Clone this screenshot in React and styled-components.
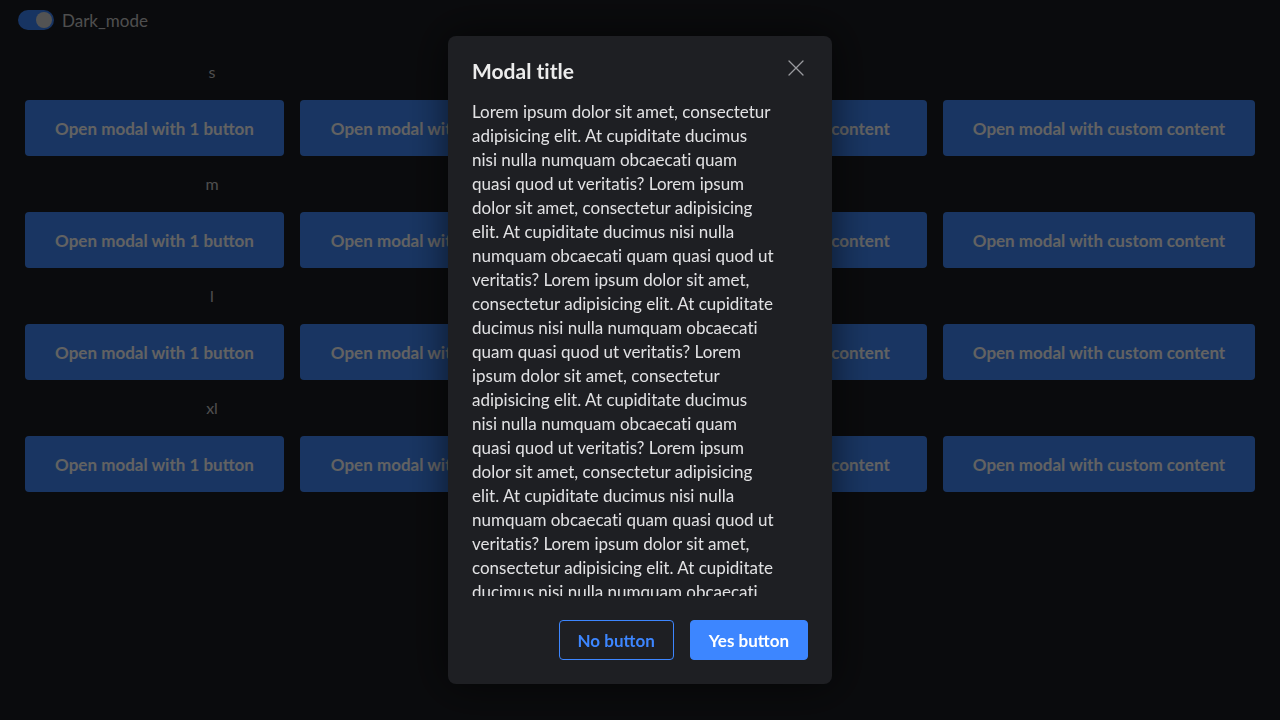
import React from 'react';
import styled, { createGlobalStyle } from 'styled-components';

const GlobalStyle = createGlobalStyle`
  html, body {
    margin: 0;
    padding: 0;
    background: #1a1c21;
    font-family: Lato, "Noto Sans", sans-serif;
    font-variant-ligatures: none;
  }
`;

const Page = styled.div`
  min-height: 720px;
  background: #1a1c21;
  color: #c8c8c8;
`;

const TopBar = styled.div`
  height: 40px;
  display: flex;
  align-items: center;
  gap: 8px;
  padding-left: 18px;
`;

const Switch = styled.span`
  position: relative;
  width: 36px;
  height: 20px;
  border-radius: 10px;
  background: #3b82f6;
  display: inline-block;

  &::after {
    content: '';
    position: absolute;
    top: 2px;
    right: 2px;
    width: 16px;
    height: 16px;
    border-radius: 50%;
    background: #d0d0d0;
  }
`;

const SwitchLabel = styled.span`
  font-size: 17px;
  color: #c4c4c4;
`;

const Sections = styled.div`
  padding: 20px 25px 0;
`;

const SizeLabel = styled.div`
  width: 374px;
  height: 24px;
  line-height: 24px;
  text-align: center;
  font-size: 16px;
  color: #c4c4c4;
  margin-bottom: 16px;
`;

const ButtonRow = styled.div`
  display: grid;
  grid-template-columns: 259px 268px 343px 312px;
  gap: 16px;
  margin-bottom: 16px;
`;

const OpenButton = styled.button`
  height: 56px;
  border: none;
  border-radius: 4px;
  background: #3f86f5;
  color: #f5f5f5;
  font-family: inherit;
  font-size: 17px;
  font-weight: 700;
  white-space: nowrap;
  overflow: hidden;
  padding: 0 16px;
`;

const Overlay = styled.div`
  position: fixed;
  inset: 0;
  background: rgba(0, 0, 0, 0.6);
  display: flex;
  align-items: center;
  justify-content: center;
`;

const Modal = styled.div`
  width: 384px;
  height: 648px;
  box-sizing: border-box;
  background: #1e1f23;
  border-radius: 8px;
  padding: 24px;
  display: flex;
  flex-direction: column;
  box-shadow: 0 0 40px rgba(0, 0, 0, 0.6);
`;

const Header = styled.div`
  display: flex;
  align-items: center;
  justify-content: space-between;
  height: 20px;
  margin-bottom: 20px;
`;

const Title = styled.h2`
  margin: 0;
  font-size: 21px;
  font-weight: 700;
  color: #ececec;
`;

const Close = styled.button`
  border: none;
  background: none;
  padding: 0;
  margin-right: 4px;
  margin-top: -4px;
  color: #9a9b9f;
  display: flex;
`;

const Body = styled.div`
  flex: 1;
  overflow: hidden;
  white-space: pre-line;
  font-size: 17px;
  line-height: 24px;
  color: #e2e2e4;
`;

const Footer = styled.div`
  display: flex;
  justify-content: flex-end;
  gap: 16px;
  margin-top: 24px;
`;

const FooterButton = styled.button`
  height: 40px;
  padding: 0 18px;
  border-radius: 4px;
  font-family: inherit;
  font-size: 17px;
  font-weight: 700;
  border: 1px solid #3d86ff;
  background: ${(p) => (p.$primary ? '#3d86ff' : 'transparent')};
  color: ${(p) => (p.$primary ? '#ffffff' : '#3d86ff')};
`;

const repeated = [
  'adipisicing elit. At cupiditate ducimus',
  'nisi nulla numquam obcaecati quam',
  'quasi quod ut veritatis? Lorem ipsum',
  'dolor sit amet, consectetur adipisicing',
  'elit. At cupiditate ducimus nisi nulla',
  'numquam obcaecati quam quasi quod ut',
  'veritatis? Lorem ipsum dolor sit amet,',
  'consectetur adipisicing elit. At cupiditate',
  'ducimus nisi nulla numquam obcaecati',
  'quam quasi quod ut veritatis? Lorem',
  'ipsum dolor sit amet, consectetur',
];
const lorem = [
  'Lorem ipsum dolor sit amet, consectetur',
  ...repeated,
  ...repeated,
  ...repeated,
].join('\n');

const sizes = ['s', 'm', 'l', 'xl'];
const labels = [
  'Open modal with 1 button',
  'Open modal with 2 buttons',
  'Open modal with scrollable content',
  'Open modal with custom content',
];

const CloseIcon = () => (
  <svg width="16" height="16" viewBox="0 0 16 16" fill="none" stroke="currentColor" strokeWidth="1.3" strokeLinecap="round">
    <path d="M1 1L15 15M15 1L1 15" />
  </svg>
);

export default function App() {
  return (
    <>
      <GlobalStyle />
      <Page>
        <TopBar>
          <Switch />
          <SwitchLabel>Dark_mode</SwitchLabel>
        </TopBar>
        <Sections>
          {sizes.map((s) => (
            <div key={s}>
              <SizeLabel>{s}</SizeLabel>
              <ButtonRow>
                {labels.map((l) => (
                  <OpenButton key={l}>{l}</OpenButton>
                ))}
              </ButtonRow>
            </div>
          ))}
        </Sections>
      </Page>
      <Overlay>
        <Modal>
          <Header>
            <Title>Modal title</Title>
            <Close aria-label="close">
              <CloseIcon />
            </Close>
          </Header>
          <Body>{lorem}</Body>
          <Footer>
            <FooterButton>No button</FooterButton>
            <FooterButton $primary>Yes button</FooterButton>
          </Footer>
        </Modal>
      </Overlay>
    </>
  );
}
